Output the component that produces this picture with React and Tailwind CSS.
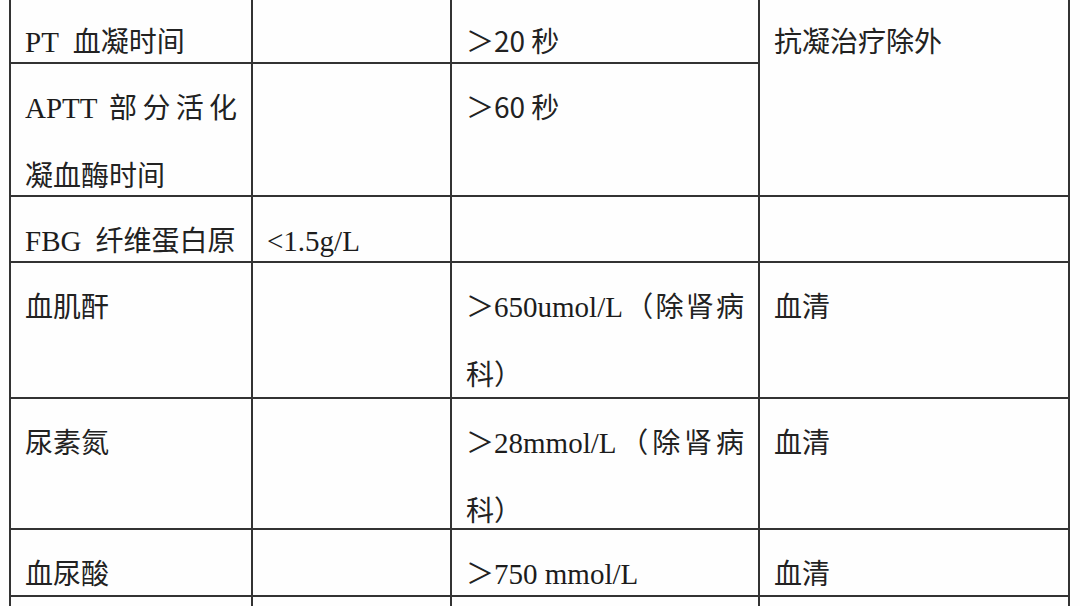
import React from "react";

// latin parts of the sheet are set in a serif face, the rest in a CJK sans
const L = ({ children }) => (
    <span className="font-['Liberation_Serif'] text-[29px] leading-none text-[#1c1c1c]">{children}</span>
);

function Cell({ lines = [], justifyFirst = false, className = "" }) {
    return (
        <div className={`border-r-2 border-b-2 border-[#333] px-[14px] pt-[8px] ${className}`}>
            {lines.map((line, i) => (
                <div
                    key={i}
                    className={
                        justifyFirst && i === 0
                            ? "whitespace-nowrap text-justify [text-align-last:justify]"
                            : "whitespace-nowrap"
                    }
                >
                    {line}
                </div>
            ))}
        </div>
    );
}

export default function App() {
    return (
        <div className="h-[606px] w-[1080px] overflow-hidden bg-[#fefefe]">
            <div className="-mt-[4px] ml-[9px] grid w-max grid-cols-[242px_199px_308px_310px] grid-rows-[66px_133px_66px_136px_131px_67px_80px] border-l-2 border-t-2 border-[#333] font-['Noto_Sans_CJK_SC',sans-serif] text-[28px] leading-[68px] text-[#222]">
                {/* PT */}
                <Cell lines={[<><L>PT</L><span className="ml-[14px]">血凝时间</span></>]} />
                <Cell />
                <Cell lines={["＞20 秒"]} />
                <Cell lines={["抗凝治疗除外"]} className="row-span-2" />

                {/* APTT */}
                <Cell lines={[<><L>APTT</L> 部分活化</>, "凝血酶时间"]} justifyFirst />
                <Cell />
                <Cell lines={["＞60 秒"]} />

                {/* FBG */}
                <Cell lines={[<><L>FBG</L><span className="ml-[14px]">纤维蛋白原</span></>]} />
                <Cell lines={[<L>&lt;1.5g/L</L>]} />
                <Cell />
                <Cell />

                {/* 血肌酐 */}
                <Cell lines={["血肌酐"]} />
                <Cell />
                <Cell lines={[<>＞<L>650umol/L</L>（除肾病</>, "科）"]} justifyFirst />
                <Cell lines={["血清"]} />

                {/* 尿素氮 */}
                <Cell lines={["尿素氮"]} />
                <Cell />
                <Cell lines={[<>＞<L>28mmol/L</L>（除肾病</>, "科）"]} justifyFirst />
                <Cell lines={["血清"]} />

                {/* 血尿酸 */}
                <Cell lines={["血尿酸"]} />
                <Cell />
                <Cell lines={[<>＞<L>750 mmol/L</L></>]} />
                <Cell lines={["血清"]} />

                <Cell />
                <Cell />
                <Cell />
                <Cell />
            </div>
        </div>
    );
}
